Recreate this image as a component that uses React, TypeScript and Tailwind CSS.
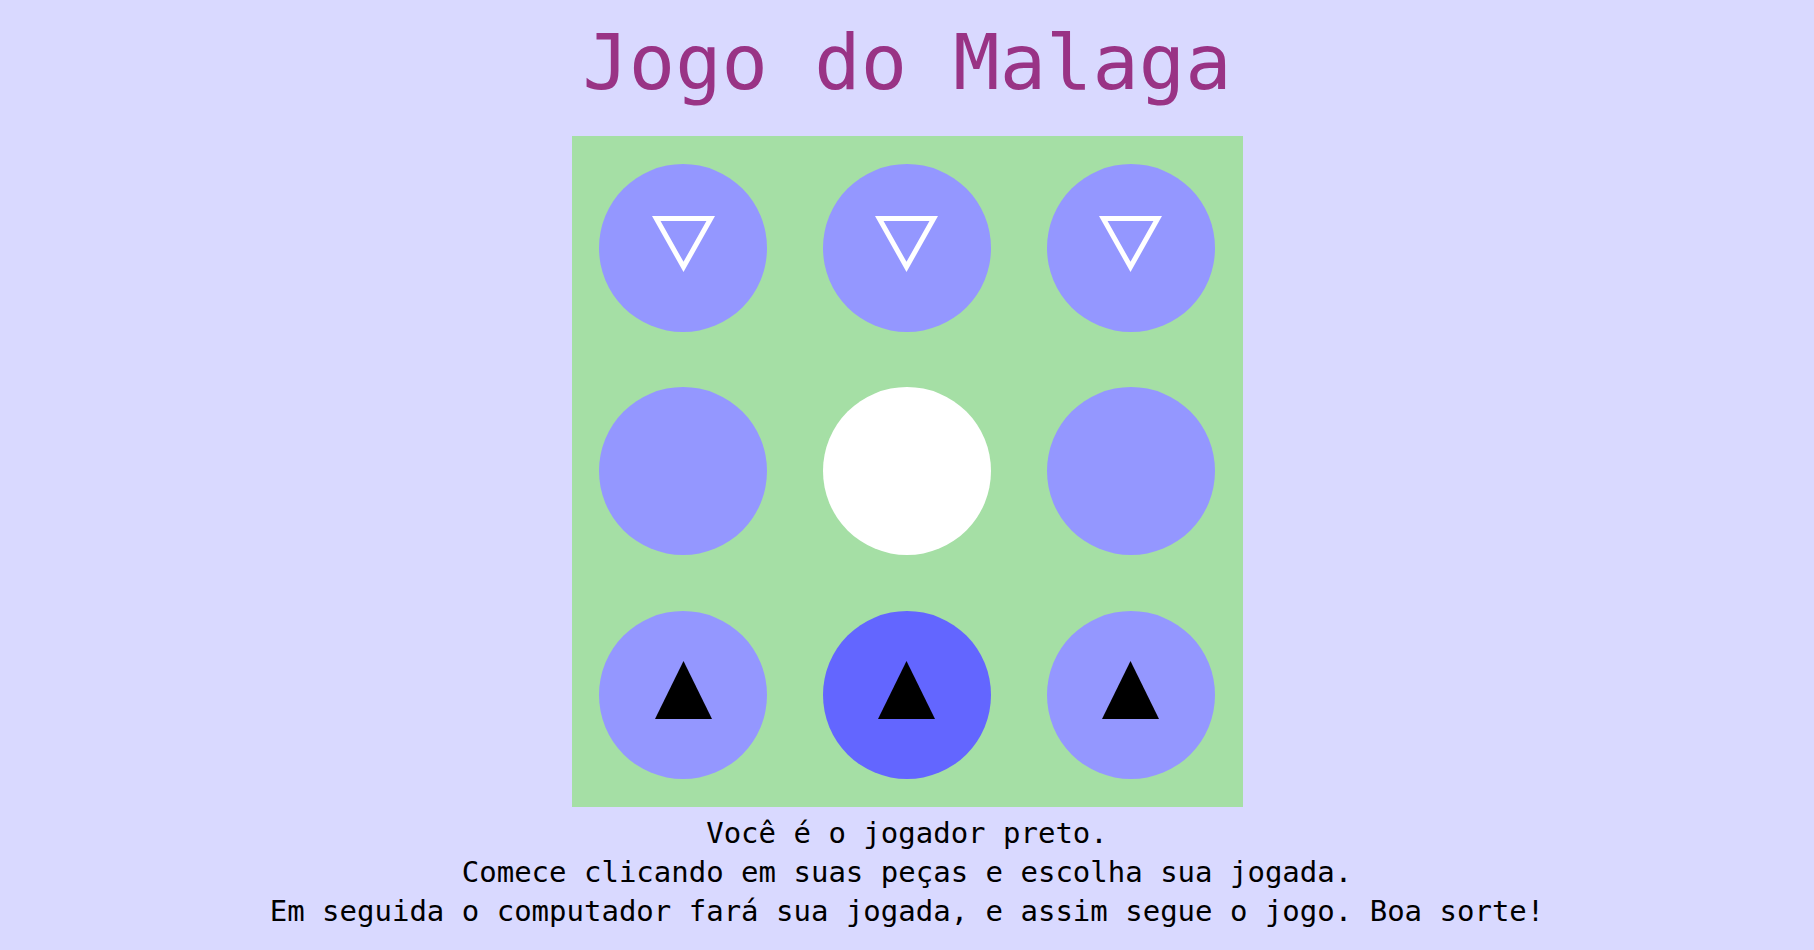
import React from "react";

type Piece = "down" | "up" | null;

type Cell = {
    piece: Piece;
    tone: "light" | "empty" | "active";
};

const board: Cell[] = [
    { piece: "down", tone: "light" },
    { piece: "down", tone: "light" },
    { piece: "down", tone: "light" },
    { piece: null, tone: "light" },
    { piece: null, tone: "empty" },
    { piece: null, tone: "light" },
    { piece: "up", tone: "light" },
    { piece: "up", tone: "active" },
    { piece: "up", tone: "light" },
];

const mono = { fontFamily: '"DejaVu Sans Mono", "Liberation Mono", monospace' };

function DownMark() {
    // hollow white triangle (computer's pieces)
    return <svg width="63" height="56" viewBox="0 0 63 56" className="mt-[52px]">
        <path d="M0 0H63L31.5 56Z M8.55 5H54.45L31.5 45.8Z" fill="#ffffff" fillRule="evenodd" />
    </svg>;
}

function UpMark() {
    return <svg width="57" height="58" viewBox="0 0 57 58" className="mt-[50px]">
        <polygon points="28.5,0 57,58 0,58" fill="#000000" />
    </svg>;
}

function Spot({ cell }: { cell: Cell }) {
    const bg = cell.tone === "empty" ? "bg-white" : cell.tone === "active" ? "bg-[#6366ff]" : "bg-[#9497ff]";
    return <div className={`w-[168px] h-[168px] rounded-full flex flex-col items-center cursor-pointer ${bg}`}>
        {cell.piece === "down" && <DownMark />}
        {cell.piece === "up" && <UpMark />}
    </div>;
}

export default function App() {
    return <div className="min-h-screen w-full bg-[#d9d9ff] flex flex-col items-center pt-[18px]" style={mono}>
        <h1 className="text-[77px] leading-[90px] text-[#993385] h-[90px]">Jogo do Malaga</h1>
        <div className="mt-[28px] w-[671px] h-[671px] bg-[#a5dfa5] grid grid-cols-3 grid-rows-3 place-items-center">
            {board.map((cell, i) => <Spot key={i} cell={cell} />)}
        </div>
        <div className="mt-[7px] text-[29px] leading-[39px] text-black text-center">
            <p>Você é o jogador preto.</p>
            <p>Comece clicando em suas peças e escolha sua jogada.</p>
            <p>Em seguida o computador fará sua jogada, e assim segue o jogo. Boa sorte!</p>
        </div>
    </div>;
}
